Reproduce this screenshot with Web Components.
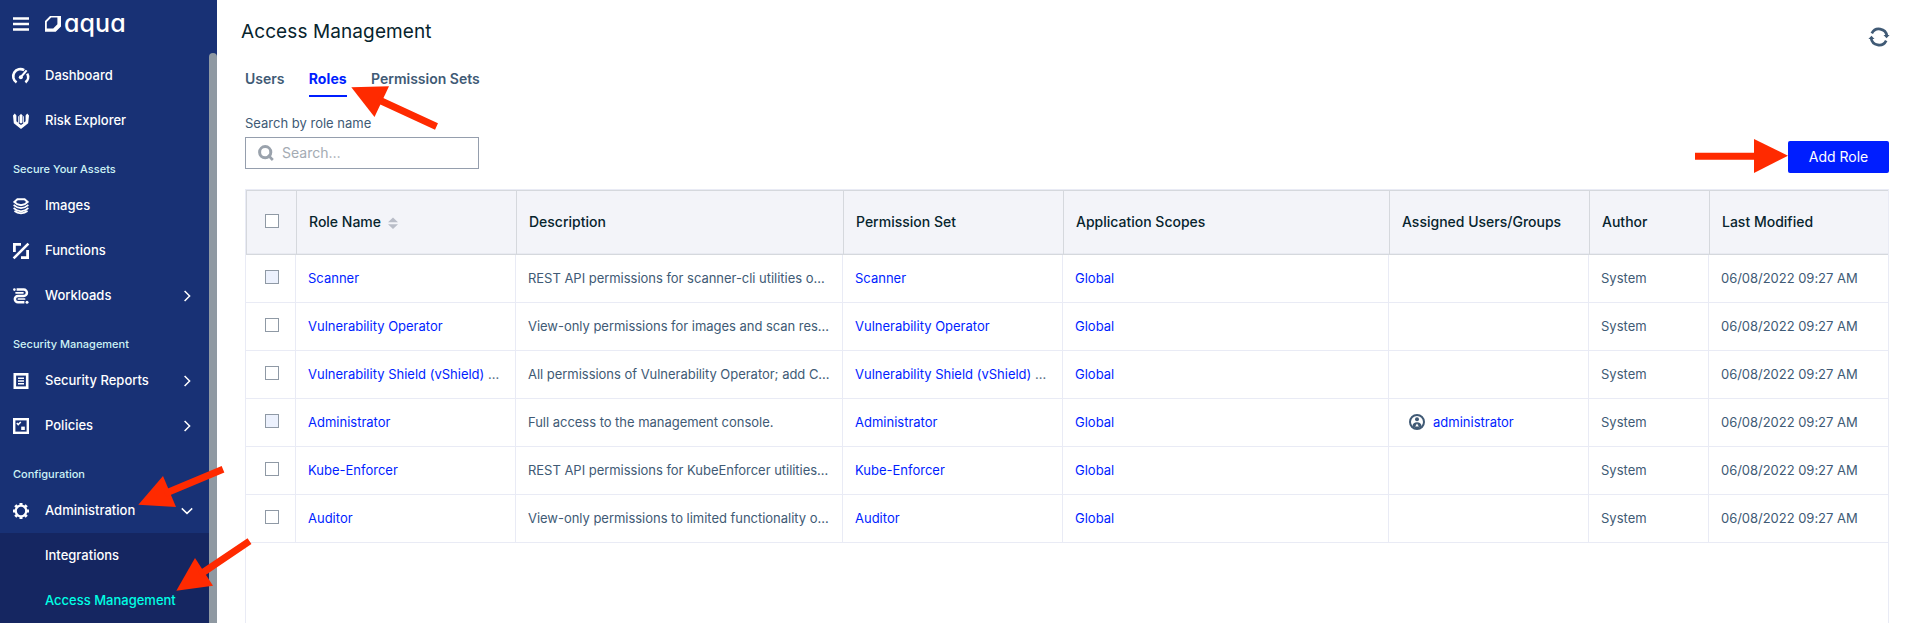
<!DOCTYPE html>
<html lang="en">
<head>
<meta charset="utf-8">
<title>Access Management</title>
<style>
html,body{margin:0;height:100%;overflow:hidden;background:#fff}
body{font-family:Inter,"Liberation Sans",sans-serif;font-size:13px;color:#405a75}
</style>
</head>
<body>
<aqua-app></aqua-app>
<script>
const define = (name, html) => {
  const t = document.createElement('template');
  t.innerHTML = html;
  customElements.define(name, class extends HTMLElement {
    constructor() {
      super();
      this.attachShadow({mode: 'open'}).append(t.content.cloneNode(true));
    }
  });
};

/* Icon set, 16x16 grid */
const ICONS = {
  menu: '<path d="M0 2.500h16M0 8h16M0 13.500h16" stroke="currentColor" stroke-width="2.500"/>',
  dashboard: '<g fill="none" stroke="currentColor"><path d="M3.600 14.400A6.700 6.700 0 0 1 11.200 2.200M14.200 5.600a6.700 6.700 0 0 1-1.800 8.800" stroke-width="2.600"/><path d="M7.600 9.400L13.600 2.400" stroke-width="2.200"/></g><circle cx="7.800" cy="9.200" r="2" fill="currentColor"/>',
  risk: '<path d="M0 2.600L1.800 .6 3.400 2.600V8.200L5 9.600V3.600L5.800 3V10.600L8 12l2.200-1.400V3l.8.600V9.600L12.600 8.200V2.600L14.200.6 16 2.600 15.200 10.200 8 16 .8 10.200z" fill="currentColor"/><path d="M8 .8L9.500 2.600v7L8 10.600 6.500 9.600v-7z" fill="currentColor"/>',
  images: '<g fill="none" stroke="currentColor" stroke-width="2"><path d="M4.400 1.300h7.200l3 2.700-2.800 2.200-3.800 1-3.800-1L1.400 4z"/><path d="M.6 7l3.600 2.300 3.800.9 3.800-.9L15.400 7M.6 10l3.600 2.400 3.800.9 3.800-.9L15.400 10M1.400 13l3 1.600 3.600.7 3.600-.7 3-1.600" stroke-width="1.700"/></g>',
  functions: '<path d="M1.400 9V1.400H8M14.600 7v7.600H8" fill="none" stroke="currentColor" stroke-width="2.800"/><path d="M.6 15.400L15.400.6" stroke="currentColor" stroke-width="2.600"/>',
  workloads: '<g fill="none" stroke="currentColor"><path d="M3.600 1.600h7.200a3.100 3.100 0 0 1 0 6.300H5a3.100 3.100 0 0 0 0 6.300h6.400" stroke-width="2.500"/><path d="M3 4.800h7M5.400 11h6.200" stroke-width="1.700" stroke-linecap="round"/></g><circle cx="1.400" cy="1.600" r="1.300" fill="currentColor"/><circle cx="14" cy="14.200" r="1.500" fill="currentColor"/>',
  reports: '<rect x="1.800" y="1.300" width="12.400" height="13.400" fill="none" stroke="currentColor" stroke-width="2.600"/><path d="M5 5.200h6M5 8h6M5 10.800h6" stroke="currentColor" stroke-width="1.500"/>',
  policies: '<rect x="1.200" y="1.200" width="13.600" height="13.600" fill="none" stroke="currentColor" stroke-width="2.400"/><path d="M3.800 5l1.400 1.600L7.800 4" fill="none" stroke="currentColor" stroke-width="1.500"/><rect x="8.200" y="8.600" width="3.600" height="3.400" fill="currentColor"/>',
  gear: '<circle cx="8" cy="8" r="5.300" fill="none" stroke="currentColor" stroke-width="2.300"/><g stroke="currentColor" stroke-width="3"><path d="M8 0v2.400M8 13.600V16M0 8h2.400M13.600 8H16M2.300 2.300L4 4M12 12l1.700 1.700M2.300 13.700L4 12M12 4l1.700-1.700"/></g>',
  right: '<path d="M5.600 3l5 5-5 5" fill="none" stroke="currentColor" stroke-width="1.500"/>',
  down: '<path d="M2.800 5.400l5.200 5 5.200-5" fill="none" stroke="currentColor" stroke-width="1.500"/>',
  search: '<circle cx="7.200" cy="7.200" r="5.600" fill="none" stroke="currentColor" stroke-width="3"/><path d="M10 10l4.800 5" stroke="currentColor" stroke-width="2.600"/>',
  refresh: '<g fill="none" stroke="currentColor" stroke-width="2.400"><path d="M1.600 4.800A7.100 7.100 0 0 1 15 7M14.400 11.200A7.100 7.100 0 0 1 1 9"/></g><path d="M12 6.200h5.400l-2.700 3zM4 9.800H-1.400l2.700-3z" fill="currentColor"/>',
  user: '<circle cx="8" cy="8" r="7" fill="none" stroke="currentColor" stroke-width="2"/><circle cx="8" cy="5.200" r="2" fill="currentColor"/><path d="M3.400 12.600C3.600 9.400 5.400 8.200 8 8.200s4.400 1.200 4.600 4.400L8 15z" fill="currentColor"/><path d="M8 9.600l1.800 2.800H6.200z" fill="#fff"/>',
  sort: '<path d="M3 7.200h10L8 2.400zM3 9.200h10L8 14z" fill="currentColor"/>'
};
customElements.define('aq-icon', class extends HTMLElement {
  constructor() { super(); this.attachShadow({mode: 'open'}); }
  connectedCallback() {
    const s = this.getAttribute('size') || 16;
    this.shadowRoot.innerHTML = `<style>:host{display:block;flex:none;width:${s}px;height:${s}px}svg{display:block;overflow:visible}</style>
      <svg width="${s}" height="${s}" viewBox="0 0 16 16">${ICONS[this.getAttribute('name')]}</svg>`;
  }
});

define('aq-logo', `<style>
  :host{display:flex;align-items:flex-start;color:#fff}
  svg{display:block;margin-right:3px}
  span{font:500 25px/30px Inter,sans-serif;font-feature-settings:"cv11";letter-spacing:.1px;margin-top:-8px}
</style>
<svg width="16" height="16" viewBox="0 0 16 16" fill="currentColor" fill-rule="evenodd"><path d="M5 0H16V10.500L10.700 15.700H0V5zM6.200 1.600L1.800 6V12.400H8.200L12.400 8.200V1.600z"/></svg><span>aqua</span>`);

customElements.define('nav-item', class extends HTMLElement {
  constructor() { super(); this.attachShadow({mode: 'open'}); }
  connectedCallback() {
    const i = this.getAttribute('icon'), c = this.getAttribute('chevron');
    this.shadowRoot.innerHTML = `<style>
      :host{display:flex;align-items:center;height:45px;padding:0 14.500px 0 13px;color:#fff;font-weight:500}
      :host([sub]){background:#152661;padding-left:45px}
      :host([active]){color:#00ffe4}
      .t{flex:1;padding:0 0 2px 16px;white-space:nowrap}
      :host([sub]) .t{padding-left:0}
    </style>${i ? `<aq-icon name="${i}"></aq-icon>` : ''}<span class="t"><slot></slot></span>${c ? `<aq-icon name="${c}"></aq-icon>` : ''}`;
  }
});

define('nav-label', `<style>
  :host{display:flex;align-items:center;height:40px;padding:12px 0 0 13px;box-sizing:border-box;color:#cdf3f5;font-weight:500;font-size:11px}
</style><slot></slot>`);

define('side-bar', `<style>
  :host{display:flex;flex-direction:column;width:217px;height:623px;background:#183175;overflow:hidden;color:#fff}
  header{display:flex;height:53px;padding:16px 0 0 13px;box-sizing:border-box;gap:16px;align-items:flex-start}
  .scroll{display:flex;flex:1}
  nav{width:209px}
  i{width:8px;background:#8f99a2;border-radius:4px 4px 0 0}
</style>
<header><aq-icon name="menu"></aq-icon><aq-logo></aq-logo></header>
<div class="scroll"><nav>
<nav-item icon="dashboard">Dashboard</nav-item>
<nav-item icon="risk">Risk Explorer</nav-item>
<nav-label>Secure Your Assets</nav-label>
<nav-item icon="images">Images</nav-item>
<nav-item icon="functions">Functions</nav-item>
<nav-item icon="workloads" chevron="right">Workloads</nav-item>
<nav-label>Security Management</nav-label>
<nav-item icon="reports" chevron="right">Security Reports</nav-item>
<nav-item icon="policies" chevron="right">Policies</nav-item>
<nav-label>Configuration</nav-label>
<nav-item icon="gear" chevron="down">Administration</nav-item>
<nav-item sub>Integrations</nav-item>
<nav-item sub active>Access Management</nav-item>
</nav><i></i></div>`);

define('page-header', `<style>
  :host{display:flex;justify-content:space-between;height:62px;padding:20px 0 0 24px;box-sizing:border-box}
  h1{margin:0;font-weight:400;font-size:19px;line-height:24px;letter-spacing:.1px;color:#07242d}
  aq-icon{margin:8px 21px 0 0;color:#405a75}
</style><h1><slot></slot></h1><aq-icon name="refresh" size="18"></aq-icon>`);

define('tab-item', `<style>
  :host{display:block;height:35px;box-sizing:border-box;font-weight:600;font-size:14px;line-height:34px;white-space:nowrap}
  :host([active]){font-weight:700;letter-spacing:.1px;color:#001eff;border-bottom:2px solid #001eff}
</style><slot></slot>`);

define('tab-bar', `<style>
  :host{display:flex;gap:24.200px;padding-left:28px;height:35px}
</style><slot></slot>`);

define('search-field', `<style>
  :host{display:block;width:234px}
  label{display:block;line-height:18px;height:23px}
  div{display:flex;align-items:center;height:32px;box-sizing:border-box;border:1px solid #959ead;padding-left:12px;color:#9aa2ac}
  span{padding:0 0 2px 8px;font-size:14px;color:#a4abb3}
</style><label>Search by role name</label><div><aq-icon name="search"></aq-icon><span>Search…</span></div>`);

define('primary-button', `<style>
  :host{display:flex;align-items:center;justify-content:center;width:101px;height:32px;box-sizing:border-box;padding-bottom:1px;border-radius:2px;background:#001eff;color:#fff;font-size:14px}
</style><slot></slot>`);

define('check-box', `<style>
  :host{display:block;flex:none;width:14px;height:14px;box-sizing:border-box;border:1px solid #8f99a5;background:#fff}
  :host([disabled]){background:#ecf1fd}
</style>`);

customElements.define('roles-table', class extends HTMLElement {
  constructor() {
    super();
    const R = [
      ['Scanner', 'REST API permissions for scanner-cli utilities o…', 1],
      ['Vulnerability Operator', 'View-only permissions for images and scan res…'],
      ['Vulnerability Shield (vShield) <b>…</b>', 'All permissions of Vulnerability Operator; add C…'],
      ['Administrator', 'Full access to the management console.', 1, 'administrator'],
      ['Kube-Enforcer', 'REST API permissions for KubeEnforcer utilities…'],
      ['Auditor', 'View-only permissions to limited functionality o…']
    ];
    const H = ['Role Name', 'Description', 'Permission Set', 'Application Scopes', 'Assigned Users/Groups', 'Author', 'Last Modified'];
    this.attachShadow({mode: 'open'}).innerHTML = `<style>
      :host{display:block;border:1px solid #e9ebf5;border-bottom:0;box-sizing:border-box}
      .head,.row{display:grid;grid-template-columns:50px 220px 327px 220px 326px 200px 120px 1fr;box-sizing:border-box}
      .head{height:65px;border:1px solid #d5d8dd;border-right:0;background:#f3f4f9;box-shadow:inset 0 -1px #e9ebf2;color:#07242d;font-weight:500;font-size:14px}
      .row{height:48px;border-bottom:1px solid #e9ebf5}
      .head>*,.row>*{display:flex;align-items:center;padding:0 0 2px 12px;white-space:nowrap;border-right:1px solid #e9ebf5}
      .head>*{border-color:#d5d8dd}
      .head>:last-child,.row>:last-child{border-right:0}
      .head>:first-child{padding:0 0 3px 18px}
      .row>:first-child{padding:0 0 3px 19px}
      .row>:nth-child(3),.row>:last-child{letter-spacing:-.03px}
      a{color:#001eff;white-space:pre}
      b{font-weight:400;color:#5a6f88;letter-spacing:-.4px}
      .head aq-icon{margin:2px 0 0 4px;color:#b9bdc8}
      .row aq-icon{margin:0 8px}
    </style>
    <div class="head"><div><check-box></check-box></div>${H.map((h, i) => `<div><span>${h}</span>${i ? '' : '<aq-icon name="sort"></aq-icon>'}</div>`).join('')}</div>
    ${R.map(([n, d, x, u]) => `<div class="row"><div><check-box${x ? ' disabled' : ''}></check-box></div><div><a>${n}</a></div><div>${d}</div><div><a>${n}</a></div><div><a>Global</a></div><div>${u ? `<aq-icon name="user"></aq-icon><a>${u}</a>` : ''}</div><div>System</div><div>06/08/2022 09:27 AM</div></div>`).join('')}`;
  }
});

/* Red callout arrows laid over the page */
define('callout-arrows', `<style>
  :host{position:absolute;inset:0;pointer-events:none}
  svg{display:block}
</style>
<svg width="1909" height="623" fill="#ff2a00" stroke="#ff2a00">
<g stroke="none"><path d="M351.300 87.300L389 86.300 374.500 117z"/><path d="M138.300 504.700L163 476l13 31z"/><path d="M176.300 590.700L195 558l18 27.700z"/><path d="M1788 155.800L1754 139v34z"/></g>
<g stroke-width="7"><path d="M436.500 126.500L378 99.500M223 469.300L165 493.500M249.500 541.200L200 574.500M1695 156.200H1756"/></g>
</svg>`);

define('aqua-app', `<style>
  :host{display:flex;position:relative;width:1909px;height:623px;overflow:hidden}
  main{flex:1;display:flex;flex-direction:column;min-width:0}
  .tools{display:flex;justify-content:space-between;align-items:flex-start;padding:17px 20px 0 28px;height:92px;box-sizing:border-box}
  primary-button{margin-top:27px}
  roles-table{flex:1;margin:0 20px 0 28px}
</style>
<side-bar></side-bar>
<main>
  <page-header>Access Management</page-header>
  <tab-bar><tab-item>Users</tab-item><tab-item active>Roles</tab-item><tab-item>Permission Sets</tab-item></tab-bar>
  <div class="tools"><search-field></search-field><primary-button>Add Role</primary-button></div>
  <roles-table></roles-table>
</main>
<callout-arrows></callout-arrows>`);
</script>
</body>
</html>
